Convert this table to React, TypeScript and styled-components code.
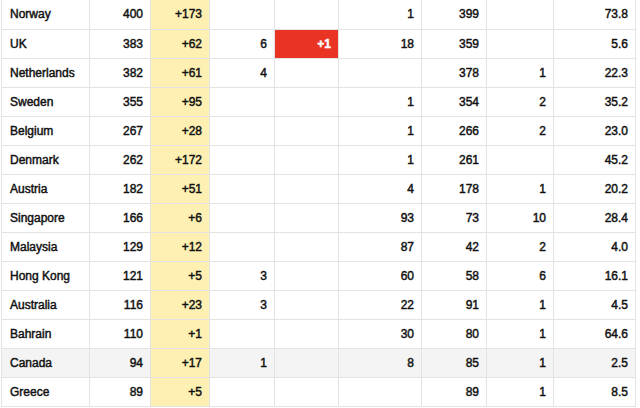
import styled, { createGlobalStyle } from 'styled-components';

type Row = {
  country: string;
  total: string;
  newCases: string;
  deaths: string;
  newDeaths: string;
  recovered: string;
  active: string;
  serious: string;
  perMillion: string;
  highlight?: boolean;
};

const rows: Row[] = [
  { country: 'Norway', total: '400', newCases: '+173', deaths: '', newDeaths: '', recovered: '1', active: '399', serious: '', perMillion: '73.8' },
  { country: 'UK', total: '383', newCases: '+62', deaths: '6', newDeaths: '+1', recovered: '18', active: '359', serious: '', perMillion: '5.6' },
  { country: 'Netherlands', total: '382', newCases: '+61', deaths: '4', newDeaths: '', recovered: '', active: '378', serious: '1', perMillion: '22.3' },
  { country: 'Sweden', total: '355', newCases: '+95', deaths: '', newDeaths: '', recovered: '1', active: '354', serious: '2', perMillion: '35.2' },
  { country: 'Belgium', total: '267', newCases: '+28', deaths: '', newDeaths: '', recovered: '1', active: '266', serious: '2', perMillion: '23.0' },
  { country: 'Denmark', total: '262', newCases: '+172', deaths: '', newDeaths: '', recovered: '1', active: '261', serious: '', perMillion: '45.2' },
  { country: 'Austria', total: '182', newCases: '+51', deaths: '', newDeaths: '', recovered: '4', active: '178', serious: '1', perMillion: '20.2' },
  { country: 'Singapore', total: '166', newCases: '+6', deaths: '', newDeaths: '', recovered: '93', active: '73', serious: '10', perMillion: '28.4' },
  { country: 'Malaysia', total: '129', newCases: '+12', deaths: '', newDeaths: '', recovered: '87', active: '42', serious: '2', perMillion: '4.0' },
  { country: 'Hong Kong', total: '121', newCases: '+5', deaths: '3', newDeaths: '', recovered: '60', active: '58', serious: '6', perMillion: '16.1' },
  { country: 'Australia', total: '116', newCases: '+23', deaths: '3', newDeaths: '', recovered: '22', active: '91', serious: '1', perMillion: '4.5' },
  { country: 'Bahrain', total: '110', newCases: '+1', deaths: '', newDeaths: '', recovered: '30', active: '80', serious: '1', perMillion: '64.6' },
  { country: 'Canada', total: '94', newCases: '+17', deaths: '1', newDeaths: '', recovered: '8', active: '85', serious: '1', perMillion: '2.5', highlight: true },
  { country: 'Greece', total: '89', newCases: '+5', deaths: '', newDeaths: '', recovered: '', active: '89', serious: '1', perMillion: '8.5' },
];

const colWidths = [88, 61, 59, 65, 64, 83, 65, 67, 82];

export default function App() {
  return (
    <>
      <GlobalStyle />
      <Table>
        <colgroup>
          {colWidths.map((w, i) => (
            <col key={i} style={{ width: w }} />
          ))}
        </colgroup>
        <tbody>
          {rows.map((row) => (
            <Tr key={row.country} $highlight={!!row.highlight}>
              <CountryCell>{row.country}</CountryCell>
              <NumCell>{row.total}</NumCell>
              <NewCasesCell>{row.newCases}</NewCasesCell>
              <NumCell>{row.deaths}</NumCell>
              <NewDeathsCell $filled={row.newDeaths !== ''}>{row.newDeaths}</NewDeathsCell>
              <NumCell>{row.recovered}</NumCell>
              <NumCell>{row.active}</NumCell>
              <NumCell>{row.serious}</NumCell>
              <NumCell>{row.perMillion}</NumCell>
            </Tr>
          ))}
        </tbody>
      </Table>
    </>
  );
}

const GlobalStyle = createGlobalStyle`
  html, body {
    margin: 0;
    padding: 0;
    background: #ffffff;
  }
  body {
    font-family: "Liberation Sans", Arial, sans-serif;
  }
`;

const Table = styled.table`
  margin-left: 1px;
  width: 634px;
  table-layout: fixed;
  border-collapse: collapse;

  td {
    height: 29px;
    padding: 0 7px 0 8px;
    border: 1px solid #e3e3e3;
    border-top: none;
    color: #111111;
    font-size: 12px;
    line-height: 14px;
    -webkit-text-stroke: 0.45px #111111;
    white-space: nowrap;
    box-sizing: border-box;
  }
`;

const Tr = styled.tr<{ $highlight: boolean }>`
  background: ${({ $highlight }) => ($highlight ? '#f4f4f4' : '#ffffff')};
`;

const CountryCell = styled.td`
  text-align: left;
`;

const NumCell = styled.td`
  text-align: right;
`;

const NewCasesCell = styled(NumCell)`
  background: #fdf0b2;
`;

const NewDeathsCell = styled(NumCell)<{ $filled: boolean }>`
  background: ${({ $filled }) => ($filled ? '#e93424' : 'transparent')};
  && {
    color: ${({ $filled }) => ($filled ? '#ffffff' : '#111111')};
    -webkit-text-stroke-color: ${({ $filled }) => ($filled ? '#ffffff' : '#111111')};
    font-weight: ${({ $filled }) => ($filled ? 700 : 400)};
  }
`;
